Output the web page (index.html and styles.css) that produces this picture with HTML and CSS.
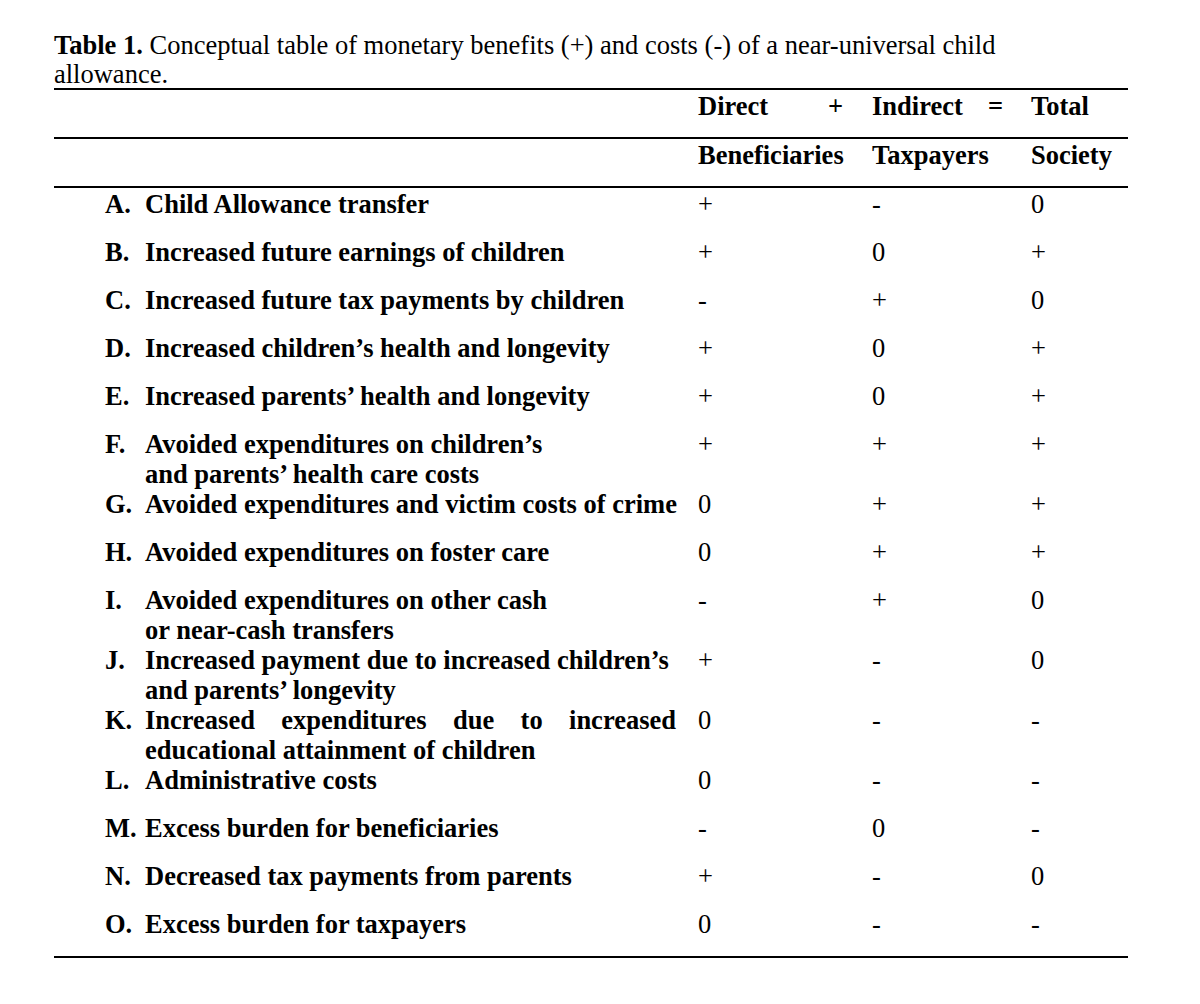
FILE: index.html
```html
<!DOCTYPE html>
<html lang="en">
<head>
<meta charset="utf-8">
<title>Table 1</title>
<link rel="stylesheet" href="styles.css">
</head>
<body>
<div class="page">
  <p class="caption"><b class="cap-label">Table 1.</b> Conceptual table of monetary benefits (+) and costs (-) of a near-universal child allowance.</p>
  <div class="tbl">
    <div class="hrow">
      <div></div>
      <div class="hc op"><span>Direct</span><span>+</span></div>
      <div class="hc op"><span>Indirect</span><span>=</span></div>
      <div class="hc"><span>Total</span></div>
    </div>
    <div class="hrow">
      <div></div>
      <div class="hc">Beneficiaries</div>
      <div class="hc">Taxpayers</div>
      <div class="hc">Society</div>
    </div>

    <div class="row"><div class="lab"><span class="ltr">A.</span><span class="txt"><span class="ln">Child Allowance transfer</span></span></div><div class="v">+</div><div class="v">-</div><div class="v">0</div></div>
    <div class="row"><div class="lab"><span class="ltr">B.</span><span class="txt"><span class="ln">Increased future earnings of children</span></span></div><div class="v">+</div><div class="v">0</div><div class="v">+</div></div>
    <div class="row"><div class="lab"><span class="ltr">C.</span><span class="txt"><span class="ln">Increased future tax payments by children</span></span></div><div class="v">-</div><div class="v">+</div><div class="v">0</div></div>
    <div class="row"><div class="lab"><span class="ltr">D.</span><span class="txt"><span class="ln">Increased children’s health and longevity</span></span></div><div class="v">+</div><div class="v">0</div><div class="v">+</div></div>
    <div class="row"><div class="lab"><span class="ltr">E.</span><span class="txt"><span class="ln">Increased parents’ health and longevity</span></span></div><div class="v">+</div><div class="v">0</div><div class="v">+</div></div>
    <div class="row"><div class="lab"><span class="ltr">F.</span><span class="txt"><span class="ln">Avoided expenditures on children’s</span><span class="ln">and parents’ health care costs</span></span></div><div class="v">+</div><div class="v">+</div><div class="v">+</div></div>
    <div class="row"><div class="lab"><span class="ltr">G.</span><span class="txt"><span class="ln">Avoided expenditures and victim costs of crime</span></span></div><div class="v">0</div><div class="v">+</div><div class="v">+</div></div>
    <div class="row"><div class="lab"><span class="ltr">H.</span><span class="txt"><span class="ln">Avoided expenditures on foster care</span></span></div><div class="v">0</div><div class="v">+</div><div class="v">+</div></div>
    <div class="row"><div class="lab"><span class="ltr">I.</span><span class="txt"><span class="ln">Avoided expenditures on other cash</span><span class="ln">or near-cash transfers</span></span></div><div class="v">-</div><div class="v">+</div><div class="v">0</div></div>
    <div class="row"><div class="lab"><span class="ltr">J.</span><span class="txt"><span class="ln">Increased payment due to increased children’s</span><span class="ln">and parents’ longevity</span></span></div><div class="v">+</div><div class="v">-</div><div class="v">0</div></div>
    <div class="row"><div class="lab"><span class="ltr">K.</span><span class="txt"><span class="ln just">Increased expenditures due to increased</span><span class="ln">educational attainment of children</span></span></div><div class="v">0</div><div class="v">-</div><div class="v">-</div></div>
    <div class="row"><div class="lab"><span class="ltr">L.</span><span class="txt"><span class="ln">Administrative costs</span></span></div><div class="v">0</div><div class="v">-</div><div class="v">-</div></div>
    <div class="row"><div class="lab"><span class="ltr">M.</span><span class="txt"><span class="ln">Excess burden for beneficiaries</span></span></div><div class="v">-</div><div class="v">0</div><div class="v">-</div></div>
    <div class="row"><div class="lab"><span class="ltr">N.</span><span class="txt"><span class="ln">Decreased tax payments from parents</span></span></div><div class="v">+</div><div class="v">-</div><div class="v">0</div></div>
    <div class="row"><div class="lab"><span class="ltr">O.</span><span class="txt"><span class="ln">Excess burden for taxpayers</span></span></div><div class="v">0</div><div class="v">-</div><div class="v">-</div></div>
  </div>
</div>
</body>
</html>
```

FILE: styles.css
```css
html, body {
  margin: 0;
  padding: 0;
  background: #fff;
}

body {
  font-family: "Liberation Serif", "Times New Roman", serif;
  font-size: 26.5px;
  color: #000;
}

.page {
  padding: 31px 0 0 54px;
  width: 1074px;
}

.caption {
  margin: 0 0 -1px;
  width: 1000px;
  line-height: 29px;
}

.tbl {
  border-top: 2px solid #000;
  border-bottom: 2px solid #000;
}

.hrow,
.row {
  display: grid;
  grid-template-columns: 636px 174px 159px 105px;
  line-height: 30px;
}

.hrow {
  height: 47px;
  border-bottom: 2px solid #000;
  font-weight: bold;
}

.hc {
  padding: 1px 0 0 8px;
}

.hc.op {
  display: flex;
  justify-content: space-between;
  padding-right: 21px;
}

.hc.op + .hc.op {
  padding-right: 20px;
}

.row {
  min-height: 48px;
  align-items: start;
}

.lab,
.v {
  padding-top: 1px;
  margin-bottom: -1px;
}

.lab {
  display: flex;
  padding-left: 51px;
  padding-right: 14px;
  font-weight: bold;
}

.ltr {
  flex: 0 0 40px;
}

.txt {
  flex: 1;
  min-width: 0;
}

.ln {
  display: block;
  white-space: nowrap;
}

.ln.just {
  white-space: normal;
  text-align: justify;
  text-align-last: justify;
}

.v {
  padding-left: 8px;
}
```
